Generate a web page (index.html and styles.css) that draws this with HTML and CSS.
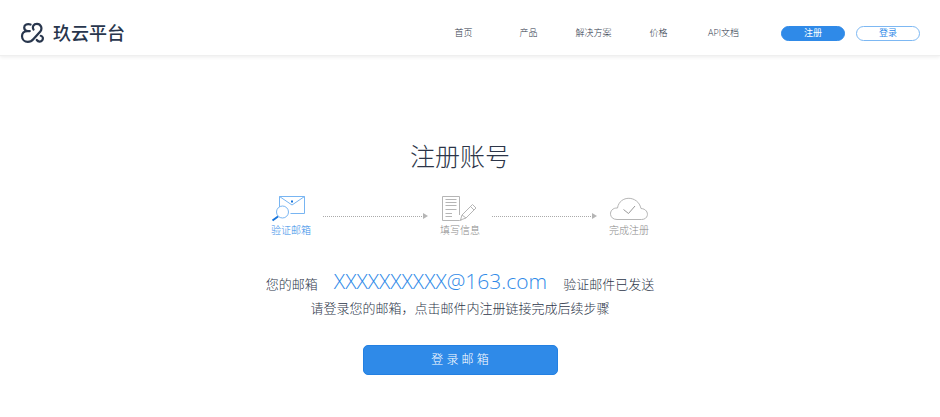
FILE: index.html
```html
<!DOCTYPE html>
<html lang="zh-CN">
<head>
<meta charset="utf-8">
<meta name="viewport" content="width=device-width, initial-scale=1">
<title>注册账号 - 玖云平台</title>
<link rel="stylesheet" href="styles.css">
</head>
<body>
<header class="header">
  <a class="brand" href="#">
    <svg class="brand-mark" viewBox="0 0 24 22" aria-hidden="true">
      <path d="M10.500 2.500C7.500 1.300 4.200 2.600 4.200 5.500C4.200 7.600 5.500 8.800 7.500 9.100C3.800 9 2 11.500 2 14.200C2.100 17.400 4.600 19.900 7.800 19.900C10.300 19.900 12 18.800 13.500 17L20.300 9.500C22.700 6.400 20.900 1.800 17 1.800C13.500 1.800 12 4.800 13.500 7.500M7 9.100H9.800M20.800 13.800C23 14.300 23.400 16.600 22.200 18.300C21 20 18.200 20 16.800 18"/>
    </svg>
    <span class="brand-name">玖云平台</span>
  </a>
  <nav class="nav">
    <a href="#">首页</a>
    <a href="#">产品</a>
    <a href="#">解决方案</a>
    <a href="#">价格</a>
    <a href="#">API文档</a>
  </nav>
  <div class="account">
    <button class="pill pill-solid" type="button">注册</button>
    <button class="pill" type="button">登录</button>
  </div>
</header>
<main class="main">
  <h1 class="title">注册账号</h1>
  <ol class="steps">
    <li class="step step-active">
      <svg class="step-icon" viewBox="0 0 40 28" aria-hidden="true">
        <path d="M8.500 12V1.500H33.500V18.500H19.500M8.500 1.500L21 10L33.500 1.500"/>
        <circle cx="11.500" cy="17" r="6"/>
        <path class="strong" d="M7 21.500L1.500 25.500M20 6.500H22"/>
      </svg>
      <span>验证邮箱</span>
    </li>
    <li class="arrow" aria-hidden="true"></li>
    <li class="step">
      <svg class="step-icon" viewBox="0 0 40 28" aria-hidden="true">
        <path d="M19.500 20V1.500H2.500V25.500H19.500L21.500 25M5.500 4.500H16.500M5.500 7.500H16.500M5.500 10.500H16.500M5.500 14.500H16.500M5.500 18.500H12M5.500 21.500H12"/>
        <path d="M22 20L32.500 9.500L36 13L26 23L20.500 25ZM22 20L26 23M30.500 11.500L34 15"/>
      </svg>
      <span>填写信息</span>
    </li>
    <li class="arrow" aria-hidden="true"></li>
    <li class="step">
      <svg class="step-icon" viewBox="0 0 40 28" aria-hidden="true">
        <path d="M8 24.500C-1 24.500-.500 12.500 8.500 13C10.500 0 29 0 32 13.500C40.500 14 40.500 24.500 32.500 24.500Z"/>
        <path class="tick" d="M14.500 14.500L19.500 18.500L26 11"/>
      </svg>
      <span>完成注册</span>
    </li>
  </ol>
  <div class="message">
    <p class="sent"><span>您的邮箱</span><strong class="email">XXXXXXXXXX@163.com</strong><span>验证邮件已发送</span></p>
    <p class="hint">请登录您的邮箱，点击邮件内注册链接完成后续步骤</p>
  </div>
  <button class="submit" type="button">登 录 邮 箱</button>
</main>
</body>
</html>
```
FILE: styles.css
```css
* { box-sizing: border-box; }

body {
  margin: 0;
  background: #fff;
  color: #2c3548;
  font-family: "Open Sans", "Noto Sans CJK SC", sans-serif;
  font-size: 13px;
  font-weight: 300;
}

a { color: inherit; text-decoration: none; }
button { font: inherit; cursor: pointer; padding: 0; }
h1, p, ol { margin: 0; padding: 0; }

.header {
  display: flex;
  align-items: center;
  padding: 11px 20px 0;
  height: 56px;
  background: #fff;
  border-bottom: 1px solid #efefef;
  box-shadow: 0 1px 4px rgba(0, 0, 0, 0.08);
}

.brand {
  display: flex;
  align-items: center;
  gap: 9px;
  margin-right: auto;
  color: #28364d;
}

.brand-mark {
  width: 24px;
  height: 22px;
  fill: none;
  stroke: currentColor;
  stroke-width: 2.2;
  stroke-linecap: round;
}

.brand-name { font-size: 18px; font-weight: 500; line-height: 22px; }

.nav {
  display: grid;
  grid-template-columns: repeat(5, 65px);
  margin-right: 25px;
  font-size: 9px;
  line-height: 14px;
  text-align: center;
}

.account { display: flex; gap: 11px; }

.pill {
  width: 64px;
  height: 15px;
  border: 1px solid #7db8f3;
  border-radius: 8px;
  background: #fff;
  color: #2f8ae8;
  font-size: 9px;
  font-weight: 400;
  line-height: 12px;
}

.pill-solid { border-color: #2f8ae8; background: #2f8ae8; color: #fff; }

.main {
  display: flex;
  flex-direction: column;
  align-items: center;
  padding: 82px 20px 40px 0;
}

.title { font-size: 25px; font-weight: 300; line-height: 36px; }

.steps {
  display: flex;
  margin-top: 21px;
  list-style: none;
  color: #888;
}

.step {
  display: flex;
  flex-direction: column;
  align-items: center;
  width: 40px;
  font-size: 10px;
  line-height: 14px;
  white-space: nowrap;
}

.step-active { color: #2f8ae8; }

.step-icon {
  width: 40px;
  height: 28px;
  fill: none;
  stroke: #b5b5b5;
  stroke-width: 1;
}

.step-active .step-icon { stroke: #78b5f2; }
.step-active .step-icon .strong { stroke: #1674db; stroke-width: 2; }
.step-icon .tick { stroke: #999; }

.arrow {
  display: flex;
  align-items: center;
  width: 105px;
  height: 6px;
  margin: 18px 12px 0;
}

.arrow::before {
  content: "";
  flex: 1;
  height: 1px;
  background: repeating-linear-gradient(90deg, #aaa 0 1px, transparent 1px 2px);
}

.arrow::after {
  content: "";
  border: solid transparent;
  border-width: 3px 0 3px 5px;
  border-left-color: #b5b5b5;
}

.message { margin-top: 30px; text-align: center; }

.sent {
  display: flex;
  justify-content: center;
  align-items: baseline;
  gap: 16px;
  line-height: 28px;
}

.email { color: #2f8ae8; font-size: 21px; font-weight: 300; }

.hint { line-height: 20px; }

.submit {
  width: 195px;
  height: 30px;
  margin-top: 27px;
  border: 1px solid #2380e2;
  border-radius: 5px;
  background: #2f8ae8;
  color: #fff;
  font-size: 12px;
  line-height: 28px;
}
```
